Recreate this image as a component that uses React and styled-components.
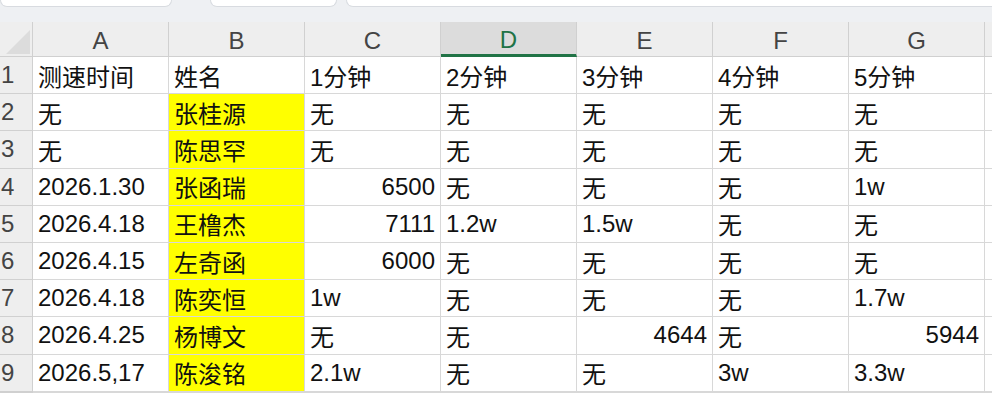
import React from "react";
import styled, { createGlobalStyle } from "styled-components";

const G = createGlobalStyle`body{margin:0;background:#fff;overflow:hidden;font-family:"Liberation Sans","Noto Sans CJK SC",sans-serif;}`;
const Top = styled.div`height:22px;background:#eef0f3;display:flex;align-items:flex-start;`;
const Tab = styled.div`width:${p=>p.w}px;margin-left:${p=>p.ml||0}px;height:6px;background:#fff;border:1px solid #d8dbe0;border-top:none;border-radius:0 0 10px 10px;flex:none;`;
const Grid = styled.div`display:grid;grid-template-columns:33px repeat(7,136px) 1fr;grid-template-rows:35px repeat(8,37.2px) 37px;`;
const Corner = styled.div`background:#eeeeee;border-right:1px solid #d0d0d0;border-bottom:1px solid #d0d0d0;position:relative;overflow:hidden;
&:after{content:"";position:absolute;right:2px;bottom:2px;border-left:24px solid transparent;border-bottom:24px solid #dcdcdc;}`;
const ColH = styled.div`background:${p=>p.sel?"#dcdcdc":"#eeeeee"};color:${p=>p.sel?"#217346":"#444"};border-right:1px solid #d0d0d0;border-bottom:${p=>p.sel?"3px solid #217346":"1px solid #d0d0d0"};display:flex;align-items:center;justify-content:center;font-size:24px;padding-top:4px;box-sizing:border-box;`;
const RowH = styled.div`background:#eeeeee;color:#444;border-right:1px solid #d0d0d0;border-bottom:1px solid #d0d0d0;font-size:24px;display:flex;align-items:center;padding-left:1px;`;
const Cell = styled.div`background:${p=>p.y?"#ffff00":"#fff"};border-right:1px solid #d8d8d8;border-bottom:1px solid #d8d8d8;font-size:24px;color:#111;display:flex;align-items:center;justify-content:${p=>p.r?"flex-end":"flex-start"};padding:0 5px;white-space:nowrap;box-sizing:border-box;`;

const rows = [
 ["测速时间","姓名","1分钟","2分钟","3分钟","4分钟","5分钟"],
 ["无","张桂源","无","无","无","无","无"],
 ["无","陈思罕","无","无","无","无","无"],
 ["2026.1.30","张函瑞",6500,"无","无","无","1w"],
 ["2026.4.18","王橹杰",7111,"1.2w","1.5w","无","无"],
 ["2026.4.15","左奇函",6000,"无","无","无","无"],
 ["2026.4.18","陈奕恒","1w","无","无","无","1.7w"],
 ["2026.4.25","杨博文","无","无",4644,"无",5944],
 ["2026.5,17","陈浚铭","2.1w","无","无","3w","3.3w"],
 ["","","","","","",""],
];

export default function App(){
  return <>
    <G/>
    <Top><Tab w={170}/><Tab w={125} ml={38}/><Tab w={660} ml={9}/></Top>
    <Grid>
      <Corner/>
      {"ABCDEFG".split("").map(c=><ColH key={c} sel={c==="D"}>{c}</ColH>)}
      <ColH/>
      {rows.map((r,i)=>(
        <React.Fragment key={i}>
          <RowH>{i<9?i+1:""}</RowH>
          {r.map((v,j)=><Cell key={j} y={j===1&&i>0&&i<9} r={typeof v==="number"}>{v}</Cell>)}
          <Cell/>
        </React.Fragment>
      ))}
    </Grid>
  </>;
}
